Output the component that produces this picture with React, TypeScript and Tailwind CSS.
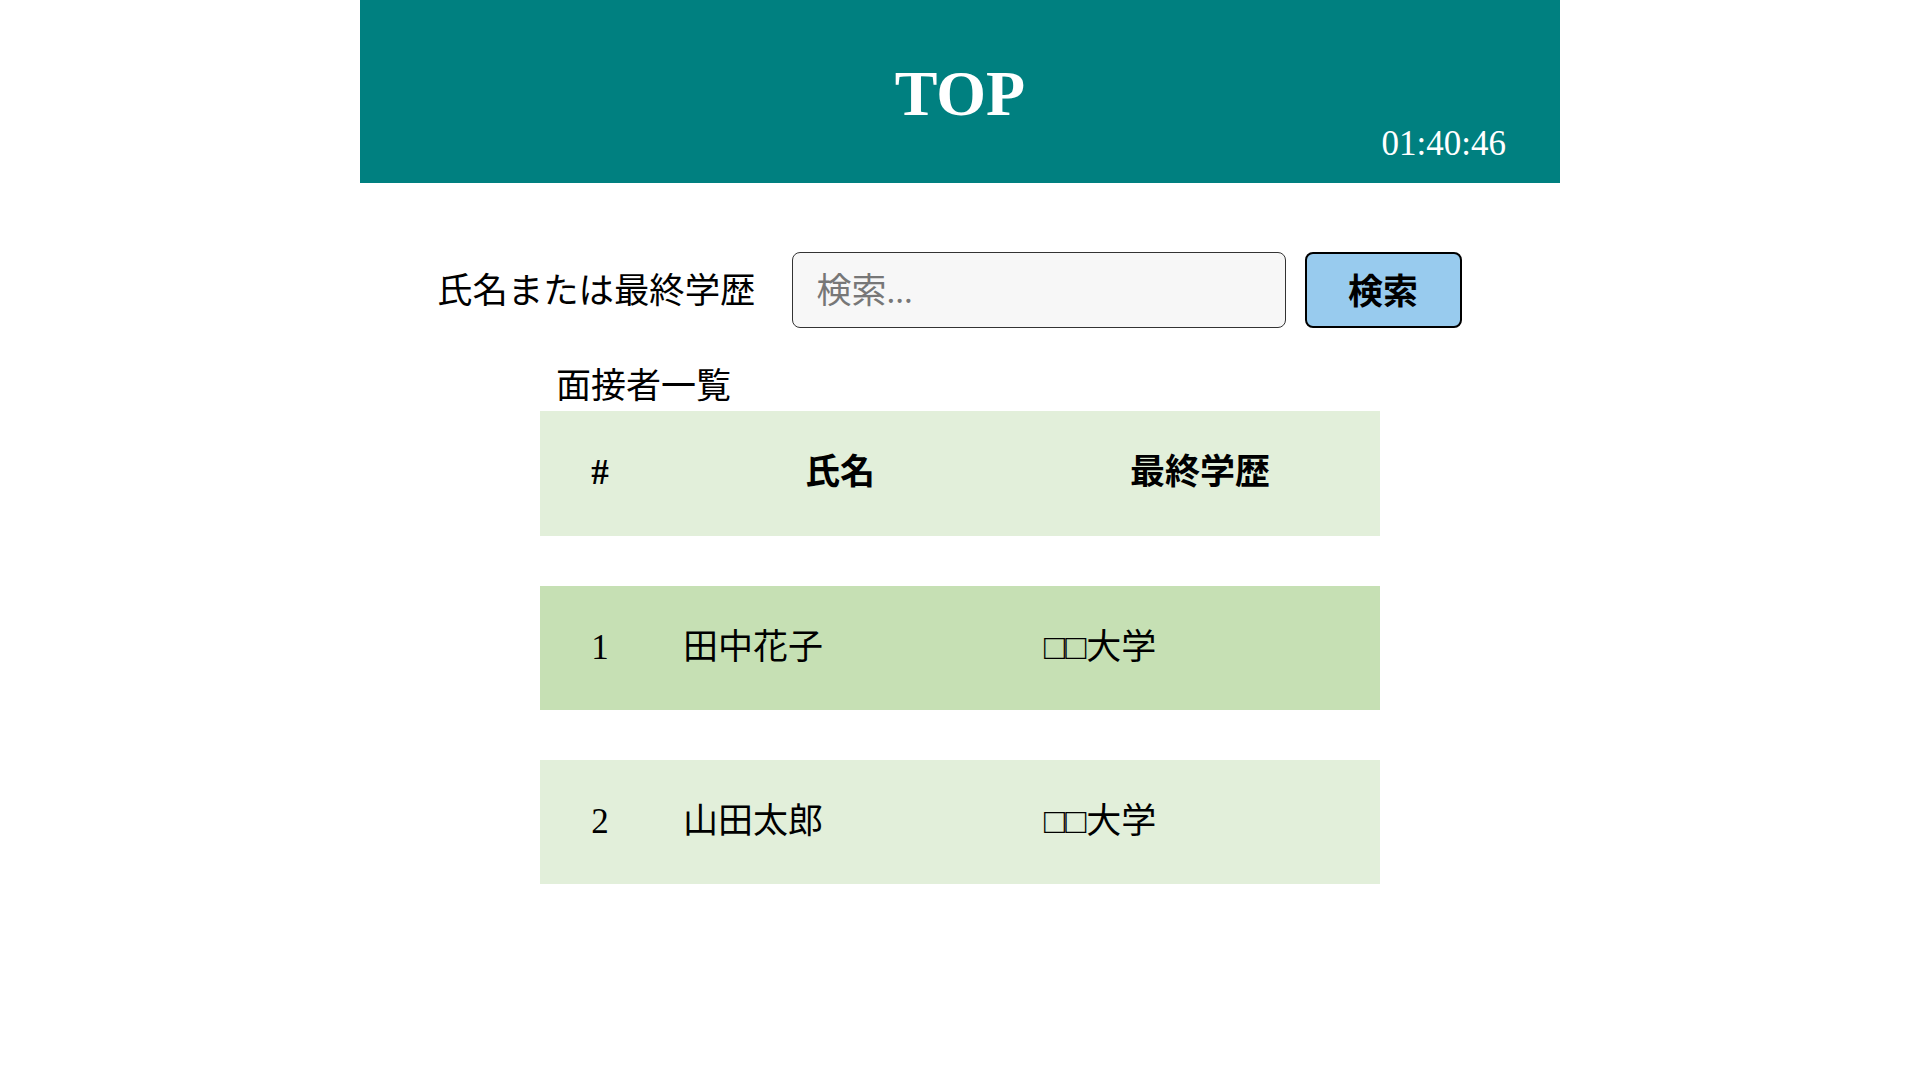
const rows = [
  { id: 1, name: '田中花子', school: '□□大学', bg: 'bg-[#c6e0b4]' },
  { id: 2, name: '山田太郎', school: '□□大学', bg: 'bg-[#e2efda]' },
];

export default function App() {
  return (
    <div className="min-h-screen bg-white font-['Liberation_Serif','Noto_Sans_CJK_JP',serif] text-black">
      <div className="mx-auto w-[1200px]">
        <header className="bg-[#008080] pt-[62px] pb-[22px] text-white">
          <h1 className="text-center text-[64px] font-bold leading-none">TOP</h1>
          <div className="pr-[54px] text-right text-[35px] leading-none">01:40:46</div>
        </header>

        <form className="mt-[69px] flex items-center pl-[77px]" onSubmit={(e) => e.preventDefault()}>
          <label htmlFor="q" className="mt-[4px] text-[35.4px] leading-none">
            氏名または最終学歴
          </label>
          <input
            id="q"
            type="text"
            placeholder="検索..."
            className="ml-[36px] h-[76px] w-[494px] rounded-lg border border-[#333] bg-[#f7f7f7] px-6 pt-1 text-[35px] outline-none placeholder:text-[#777]"
          />
          <button
            type="submit"
            className="ml-[19px] h-[76px] w-[157px] rounded-lg border-2 border-black bg-[#98cbee] pt-1 text-[35px] font-bold leading-none"
          >
            検索
          </button>
        </form>

        <section className="mx-auto mt-[41px] w-[840px]">
          <h2 className="pl-4 text-[35px] leading-none">面接者一覧</h2>
          <div className="mt-[7px] grid h-[125px] grid-cols-[120px_360px_360px] items-center bg-[#e2efda] text-[35px] font-bold">
            <div className="text-center">#</div>
            <div className="text-center">氏名</div>
            <div className="text-center">最終学歴</div>
          </div>
          {rows.map((r) => (
            <div
              key={r.id}
              className={`mt-[50px] grid h-[124px] grid-cols-[120px_360px_360px] items-center text-[35px] ${r.bg}`}
            >
              <div className="text-center">{r.id}</div>
              <div className="pl-[23px]">{r.name}</div>
              <div className="pl-[24px]">{r.school}</div>
            </div>
          ))}
        </section>
      </div>
    </div>
  );
}
